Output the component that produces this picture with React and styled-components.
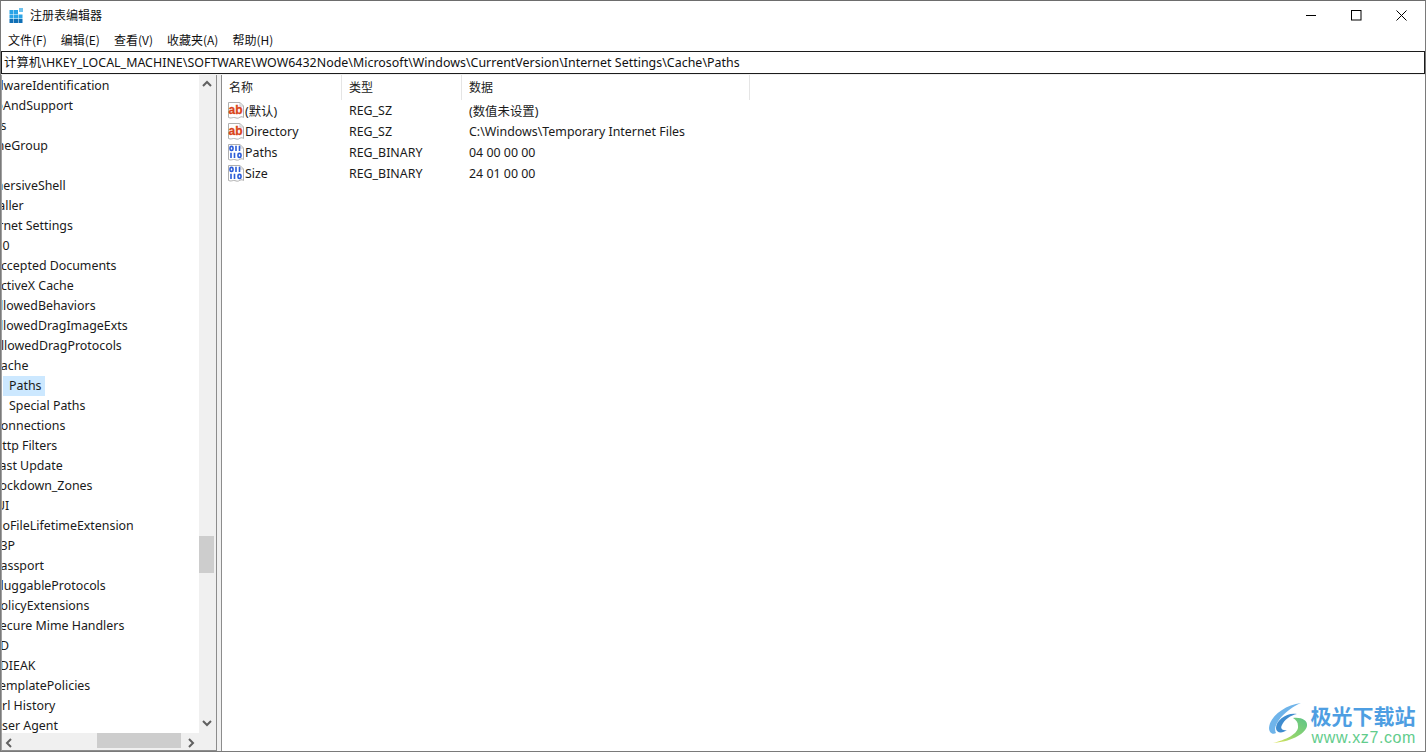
import React from "react";
import styled, { createGlobalStyle } from "styled-components";

const Global = createGlobalStyle`
  html, body { margin: 0; padding: 0; background: #fff; }
  #root { width: 1426px; height: 752px; }
  * { box-sizing: border-box; }
`;

const Window = styled.div`
  width: 1426px; height: 752px; display: flex; flex-direction: column;
  border: 1px solid #7a7a7a; border-top-color: #6d6d6d; background: #f0f0f0; overflow: hidden; position: relative;
  font-family: "Noto Sans", "Noto Sans CJK SC", sans-serif; font-size: 12.4px; color: #1a1a1a;
`;
const TitleBar = styled.div`
  height: 30px; background: #fff; display: flex; align-items: center; padding-left: 8px;
`;
const TitleText = styled.span`
  margin-left: 5px; padding-bottom: 3px; font-size: 12px; color: #111; font-family: "Noto Sans CJK SC", sans-serif;
`;
const Controls = styled.div`margin-left: auto; display: flex; height: 100%; padding-bottom: 2px; margin-right: 1px;`;
const ControlBtn = styled.div`width: 45px; height: 100%; display: flex; align-items: center; justify-content: center;`;
const MenuBar = styled.div`height: 20px; background: #fff; display: flex; padding: 0 0 3px 7px; gap: 14px; align-items: center;`;
const MenuItem = styled.span`font-size: 12px; font-family: "Noto Sans CJK SC", sans-serif; color: #111;`;
const AddressBar = styled.div`
  height: 23px; border: 1px solid #1c1c1c; background: #fff; display: flex; align-items: center;
  padding: 0 0 2px 2px; color: #111; white-space: nowrap; letter-spacing: .03px;
`;
const Panes = styled.div`flex: 1; display: flex; min-height: 0; padding-top: 1px;`;
const TreePane = styled.div`
  width: 216px; background: #f0f0f0; display: grid; grid-template-columns: 197px 17px; grid-template-rows: 658px 17px;
  border-left: 1px solid #a0a0a0; border-right: 1px solid #8c8c8c; border-bottom: 1px solid #8c8c8c;
`;
const TreeBody = styled.div`background: #fff; overflow: hidden; padding-top: 1px;`;
const TreeRow = styled.div`height: 20px; display: flex; align-items: center; white-space: nowrap; margin-left: ${p => p.$x}px;`;
const TreeLabel = styled.span`
  padding: 0 3px 0 6px; height: 20px; line-height: 20px; color: #1a1a1a;
  background: ${p => p.$sel ? "#cce8ff" : "transparent"};
`;
const VBar = styled.div`background: #f0f0f0; display: flex; flex-direction: column; justify-content: space-between; position: relative; padding-bottom: 2px;`;
const VThumb = styled.div`position: absolute; left: 0; width: 15px; top: 461px; height: 37px; background: #cdcdcd;`;
const ArrowBox = styled.div`height: 17px; width: 15px; display: flex; align-items: center; justify-content: center;`;
const HBar = styled.div`background: #f0f0f0; display: flex; justify-content: space-between; position: relative;`;
const HThumb = styled.div`position: absolute; top: 0; height: 15px; left: 95px; width: 84px; background: #cdcdcd;`;
const Corner = styled.div`background: #f0f0f0;`;
const Splitter = styled.div`width: 4px; background: #f0f0f0;`;
const ListPane = styled.div`flex: 1; background: #fff; border-left: 1px solid #8c8c8c;`;
const HeaderRow = styled.div`height: 25px; display: flex;`;
const HeaderCell = styled.div`
  width: ${p => p.$w}px; border-right: 1px solid #e5e5e5; padding: 0 0 2px 7px; display: flex; align-items: center;
  font-family: "Noto Sans CJK SC", sans-serif; font-size: 12px; color: #222;
`;
const DataRow = styled.div`height: 21px; display: flex; align-items: center; color: #1a1a1a;`;
const NameCell = styled.div`width: 120px; display: flex; align-items: center; gap: 1px; padding-left: 6px;`;
const TypeCell = styled.div`width: 120px; padding-left: 7px;`;
const DataCell = styled.div`padding-left: 7px;`;
const Watermark = styled.div`position: absolute; right: 9px; bottom: 3px; display: flex; align-items: center; gap: 0;`;
const WmText = styled.div`display: flex; flex-direction: column; align-items: flex-start;`;
const WmTitle = styled.div`font-family: "Noto Sans CJK SC", sans-serif; font-weight: 700; font-size: 21px; line-height: 26px; color: #4e9ee2;`;
const WmUrl = styled.div`font-family: "Liberation Sans", sans-serif; font-size: 16px; line-height: 20px; color: #62cc8c; letter-spacing: .6px; padding-left: 1px;`;

const Logo = () => (
  <svg width="16" height="16" viewBox="0 0 16 16">
    {[0,1,2].map(r => [0,1,2].map(c => (r===0&&c===2)?null:<rect key={r+"-"+c} x={c*4.5+.5} y={r*4.5+2} width="4" height="4" fill={r===2?"#0f6fb5":"#2aa3e6"}/>))}
    <rect x="10" y="0" width="4" height="4" fill="#6fc3ef"/>
  </svg>
);
const Chevron = ({ d }) => {
  const p = { up: "M1 6 L5 2 L9 6", down: "M1 2 L5 6 L9 2", left: "M6 1 L2 5 L6 9", right: "M2 1 L6 5 L2 9" }[d];
  return <svg width="10" height="10" viewBox="0 0 10 8" style={{overflow:"visible"}}><path d={p} fill="none" stroke="#606060" strokeWidth="2"/></svg>;
};
const FileShape = ({ children }) => (
  <svg width="16" height="17" viewBox="0 0 16 17">
    <path d="M.5 .5h11.5l3.5 3.5v11.5c-2-1.5-3-.5-5 .5-2 .7-3-.7-5-.5-2 .2-2.500 1-5 0z" fill="#fff" stroke="#b0b0b0"/>
    <path d="M12 .5v3.5h3.500" fill="none" stroke="#c4c4c4"/>
    {children}
  </svg>
);
const IconStr = () => (
  <FileShape>
    <text x="0.5" y="12" fontFamily="'Liberation Sans',sans-serif" fontSize="12" fontWeight="700" fill="#d9441a" stroke="#d9441a" strokeWidth=".3">ab</text>
  </FileShape>
);
const IconBin = () => (
  <FileShape>
    <g fill="none" stroke="#2a5bd7" strokeWidth="1.6">
      <rect x="2" y="2.400" width="3" height="4" rx="1.400"/>
      <path d="M8 1.700v5.400M11.500 1.700v5.400"/>
      <path d="M3 8.700v5.400M6.500 8.700v5.400"/>
      <rect x="10" y="9.400" width="3" height="4" rx="1.400"/>
    </g>
  </FileShape>
);

const L1 = -32, L2 = -15, L3 = 1;
const tree = [
  ["HardwareIdentification", L1 - 1], ["HelpAndSupport", L1], ["Hints", L1], ["HomeGroup", L1], ["IME", L1],
  ["ImmersiveShell", L1], ["Installer", L1], ["Internet Settings", L1 - 1], ["5.0", L2 - 1],
  ["Accepted Documents", L2], ["ActiveX Cache", L2], ["AllowedBehaviors", L2 - 1], ["AllowedDragImageExts", L2 - 1], ["AllowedDragProtocols", L2],
  ["Cache", L2], ["Paths", L3, true], ["Special Paths", L3], ["Connections", L2], ["Http Filters", L2], ["Last Update", L2],
  ["Lockdown_Zones", L2], ["UI", L2 + 3], ["NoFileLifetimeExtension", L2], ["P3P", L2], ["Passport", L2], ["PluggableProtocols", L2],
  ["PolicyExtensions", L2], ["Secure Mime Handlers", L2], ["TD", L2], ["SDIEAK", L2], ["TemplatePolicies", L2], ["Url History", L2], ["User Agent", L2],
];

const rows = [
  [<IconStr key="i" />, "(默认)", "REG_SZ", "(数值未设置)"],
  [<IconStr key="i" />, "Directory", "REG_SZ", "C:\\Windows\\Temporary Internet Files"],
  [<IconBin key="i" />, "Paths", "REG_BINARY", "04 00 00 00"],
  [<IconBin key="i" />, "Size", "REG_BINARY", "24 01 00 00"],
];

export default function App() {
  return (
    <Window>
      <Global />
      <TitleBar>
        <Logo />
        <TitleText>注册表编辑器</TitleText>
        <Controls>
          <ControlBtn><svg width="11" height="11"><path d="M0 5.500h10" stroke="#000"/></svg></ControlBtn>
          <ControlBtn><svg width="11" height="11"><rect x=".5" y=".5" width="9.500" height="9.500" fill="none" stroke="#000"/></svg></ControlBtn>
          <ControlBtn><svg width="11" height="11"><path d="M.5.5l10 10M10.500.5l-10 10" stroke="#000"/></svg></ControlBtn>
        </Controls>
      </TitleBar>
      <MenuBar>
        {["文件(F)", "编辑(E)", "查看(V)", "收藏夹(A)", "帮助(H)"].map(m => <MenuItem key={m}>{m}</MenuItem>)}
      </MenuBar>
      <AddressBar>计算机\HKEY_LOCAL_MACHINE\SOFTWARE\WOW6432Node\Microsoft\Windows\CurrentVersion\Internet Settings\Cache\Paths</AddressBar>
      <Panes>
        <TreePane>
          <TreeBody>
            {tree.map(([t, x, sel]) => <TreeRow key={t} $x={x}><TreeLabel $sel={sel}>{t}</TreeLabel></TreeRow>)}
          </TreeBody>
          <VBar>
            <ArrowBox><Chevron d="up" /></ArrowBox>
            <VThumb />
            <ArrowBox><Chevron d="down" /></ArrowBox>
          </VBar>
          <HBar>
            <ArrowBox><Chevron d="left" /></ArrowBox>
            <HThumb />
            <ArrowBox><Chevron d="right" /></ArrowBox>
          </HBar>
          <Corner />
        </TreePane>
        <Splitter />
        <ListPane>
          <HeaderRow>
            <HeaderCell $w={120}>名称</HeaderCell>
            <HeaderCell $w={120}>类型</HeaderCell>
            <HeaderCell $w={288}>数据</HeaderCell>
          </HeaderRow>
          {rows.map((r, i) => (
            <DataRow key={i}>
              <NameCell>{r[0]}<span>{r[1]}</span></NameCell>
              <TypeCell>{r[2]}</TypeCell>
              <DataCell>{r[3]}</DataCell>
            </DataRow>
          ))}
        </ListPane>
      </Panes>
      <Watermark>
        <svg width="44" height="46" viewBox="0 0 44 46">
          <defs>
            <linearGradient id="wmGreen" x1="0" y1="1" x2="1" y2="0">
              <stop offset="0" stopColor="#e6e65a"/>
              <stop offset=".45" stopColor="#8fd46f"/>
              <stop offset="1" stopColor="#5cc488"/>
            </linearGradient>
          </defs>
          <path d="M34 1C18 3 3 14 2 26c0 5 4 7 7 5C5 24 16 9 34 1z" fill="#6fb4ea"/>
          <path d="M30 12C20 10 9 18 9 26c0 5 6 6 11 2-5 1-7-2-5-5 2-5 9-10 15-11z" fill="#3f8ccf"/>
          <path d="M26 16c8-1 15 2 14 8-2 9-18 16-34 17 12-3 26-9 25-17 0-4-2-6-5-8z" fill="url(#wmGreen)"/>
        </svg>
        <WmText>
          <WmTitle>极光下载站</WmTitle>
          <WmUrl>www.xz7.com</WmUrl>
        </WmText>
      </Watermark>
    </Window>
  );
}
